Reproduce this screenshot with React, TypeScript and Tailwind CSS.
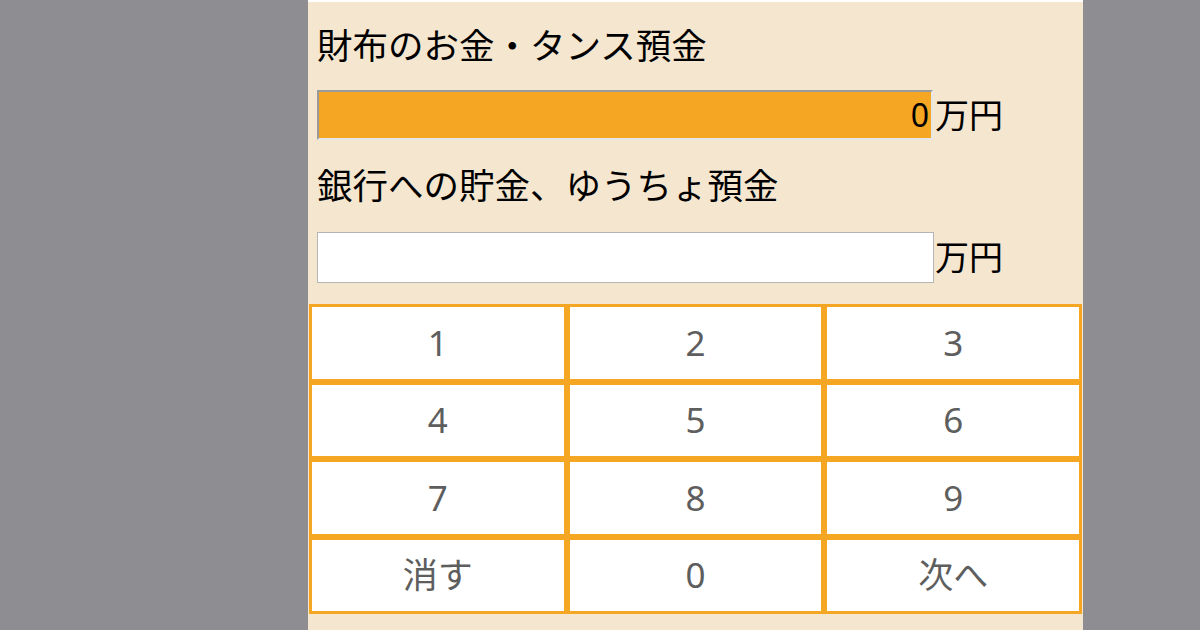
import { useState } from 'react'

const KEYS = ['1', '2', '3', '4', '5', '6', '7', '8', '9', '消す', '0', '次へ']

const FONT = 'font-["Noto_Sans","Noto_Sans_CJK_JP",sans-serif]'

export default function App() {
  const [wallet] = useState('0')

  return (
    <div className={`min-h-[630px] w-[1200px] bg-[#8e8d92] ${FONT}`}>
      <div className="ml-[308px] w-[775px] min-h-[630px] bg-[#f5e6cf] border-t-2 border-white">
        <div className="px-[9px]">
          {/* 財布 */}
          <div className="h-[88px] flex items-center text-[35.5px] text-black leading-none">
            財布のお金・タンス預金
          </div>
          <div className="flex items-center h-[50px]">
            <div className="w-[616px] h-[50px] bg-[#f5a623] border-2 border-t-[#9a9a9a] border-l-[#9a9a9a] border-r-[#e6e6e6] border-b-[#e6e6e6] flex items-center justify-end pr-[2px] text-[32px] text-black">
              {wallet}
            </div>
            <span className="ml-[2px] text-[34px] text-black">万円</span>
          </div>

          {/* 銀行 */}
          <div className="h-[92px] flex items-center text-[35.5px] text-black leading-none">
            銀行への貯金、ゆうちょ預金
          </div>
          <div className="flex items-center h-[51px]">
            <div className="w-[617px] h-[51px] bg-white border border-[#b5b5b5]" />
            <span className="ml-[1px] text-[34px] text-black">万円</span>
          </div>
        </div>

        {/* テンキー */}
        <div className="mt-[21px] ml-[1px] w-[773px] grid grid-cols-3">
          {KEYS.map((k) => (
            <button
              key={k}
              className="h-[77.5px] bg-white border-[3px] border-[#f5a623] flex items-center justify-center text-[35px] text-[#5e5e5e]"
            >
              {k}
            </button>
          ))}
        </div>
      </div>
    </div>
  )
}
